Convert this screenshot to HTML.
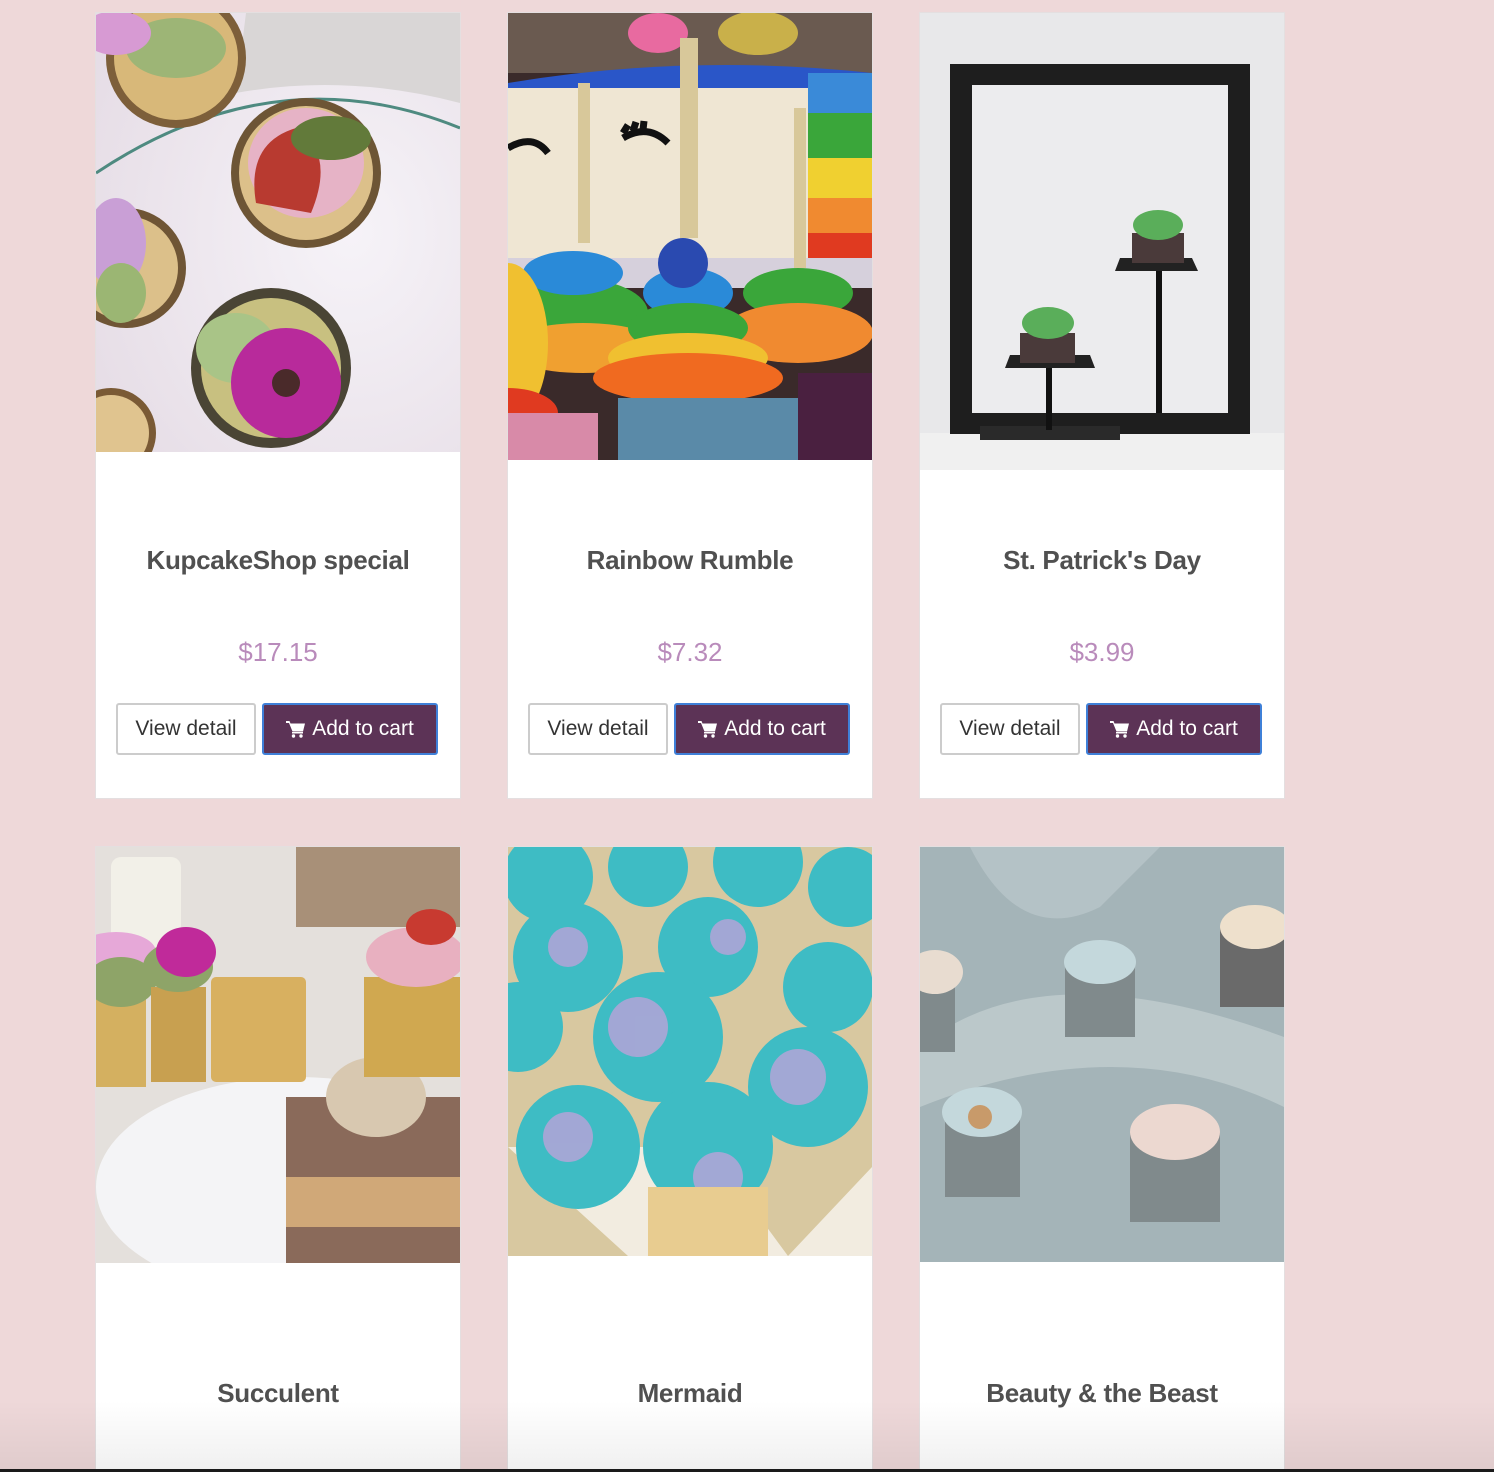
<!DOCTYPE html>
<html><head><meta charset="utf-8">
<style>
html,body{margin:0;padding:0;width:1494px;height:1472px;overflow:hidden}
body{background:#eed8d9;position:relative;font-family:"Liberation Sans",Roboto,sans-serif}
.card{position:absolute;width:364px;background:#fff;border:1px solid #e4dfe0}
.img{position:absolute;left:0;top:0;width:364px;display:block}
.t{position:absolute;left:0;width:364px;text-align:center;font-weight:bold;font-size:26px;color:#505050;letter-spacing:-0.3px}
.p{position:absolute;left:0;width:364px;text-align:center;font-size:26px;color:#b98bbb}
.b1{position:absolute;left:20px;width:136px;height:48px;border:2px solid #ccc;border-radius:3px;box-sizing:content-box;font-size:21px;color:#333;text-align:center;line-height:48px;background:#fff}
.b2{position:absolute;left:166px;width:172px;height:48px;border:2px solid #3f80d8;border-radius:3px;background:#5c3356;color:#fff;font-size:21px;text-align:center;line-height:48px}
.b2 svg{vertical-align:-3px;margin-right:6px}
.fade{position:absolute;left:0;top:1400px;width:1494px;height:69px;background:linear-gradient(rgba(0,0,0,0),rgba(0,0,0,0.06))}
.line{position:absolute;left:0;top:1469px;width:1494px;height:3px;background:#1a1a1a}
</style></head><body>

<!-- Card 1 -->
<div class="card" style="left:95px;top:12px;height:785px">
<svg class="img" height="439" viewBox="0 0 364 439">
<defs><radialGradient id="g1" cx="0.7" cy="0.5" r="0.8"><stop offset="0" stop-color="#f6f3f8"/><stop offset="1" stop-color="#e6dde6"/></radialGradient></defs>
<rect width="364" height="439" fill="url(#g1)"/>
<path d="M150 0 L364 0 L364 90 Q250 60 140 80 Z" fill="#d9d6d6"/>
<path d="M0 160 Q180 40 364 115" stroke="#4e8a80" stroke-width="3" fill="none"/>
<circle cx="80" cy="45" r="70" fill="#7d5f3a"/><circle cx="80" cy="45" r="62" fill="#d8b879"/>
<ellipse cx="80" cy="35" rx="50" ry="30" fill="#9db576"/>
<ellipse cx="20" cy="20" rx="35" ry="22" fill="#d79ad3"/>
<circle cx="210" cy="160" r="75" fill="#6d5535"/><circle cx="210" cy="160" r="67" fill="#dcc08a"/>
<ellipse cx="210" cy="150" rx="58" ry="55" fill="#e6b3c6"/>
<path d="M160 190 Q150 130 200 115 Q240 140 215 200 Z" fill="#b83a30"/>
<ellipse cx="235" cy="125" rx="40" ry="22" fill="#627a3a"/>
<circle cx="30" cy="255" r="60" fill="#6f5535"/><circle cx="30" cy="255" r="52" fill="#dcc08a"/>
<ellipse cx="20" cy="230" rx="30" ry="45" fill="#c99fd6"/>
<ellipse cx="25" cy="280" rx="25" ry="30" fill="#9bb673"/>
<circle cx="175" cy="355" r="80" fill="#4a4535"/><circle cx="175" cy="355" r="70" fill="#c8c080"/>
<ellipse cx="140" cy="335" rx="40" ry="35" fill="#a9c487"/>
<circle cx="190" cy="370" r="55" fill="#b82a9b"/><circle cx="190" cy="370" r="14" fill="#4a2a2a"/>
<circle cx="15" cy="420" r="45" fill="#7a5a35"/><circle cx="15" cy="420" r="38" fill="#e0c48f"/>
</svg>
<div class="t" style="top:532px">KupcakeShop special</div>
<div class="p" style="top:624px">$17.15</div>
<div class="b1" style="top:690px">View detail</div>
<div class="b2" style="top:690px"><svg width="20" height="18" viewBox="0 0 20 18"><path d="M0 1h3.5l1 2.5H19l-2 8H6.5L3 3H0z M6 12h11v1.5H6z" fill="#fff"/><circle cx="7.5" cy="16" r="1.7" fill="#fff"/><circle cx="15" cy="16" r="1.7" fill="#fff"/></svg>Add to cart</div>
</div>

<!-- Card 2 -->
<div class="card" style="left:507px;top:12px;height:785px">
<svg class="img" height="447" viewBox="0 0 364 447">
<rect width="364" height="447" fill="#3a2a2a"/>
<rect y="0" width="364" height="60" fill="#6a5a50"/>
<ellipse cx="150" cy="20" rx="30" ry="20" fill="#e86aa0"/>
<ellipse cx="250" cy="20" rx="40" ry="22" fill="#c9b04a"/>
<path d="M0 70 Q180 40 364 60 L364 90 L0 90Z" fill="#2a56c8"/>
<rect x="0" y="75" width="340" height="175" fill="#efe6d3"/>
<rect x="300" y="60" width="64" height="40" fill="#3a8ad8"/>
<rect x="300" y="100" width="64" height="45" fill="#3aa63a"/>
<rect x="300" y="145" width="64" height="40" fill="#f0d030"/>
<rect x="300" y="185" width="64" height="35" fill="#f08a30"/>
<rect x="300" y="220" width="64" height="25" fill="#e03a20"/>
<rect x="0" y="245" width="364" height="30" fill="#d6d0dc"/>
<path d="M0 135q25 -15 40 5 M115 125q25 -15 45 5 M115 120 l5 -8 M125 118 l3 -9 M135 117 l1 -9" stroke="#111" stroke-width="7" fill="none"/>
<rect x="172" y="25" width="18" height="200" fill="#d8c89a"/>
<rect x="70" y="70" width="12" height="160" fill="#d8c89a"/>
<rect x="286" y="95" width="12" height="160" fill="#d8c89a"/>
<ellipse cx="65" cy="300" rx="75" ry="35" fill="#3aa63a"/><ellipse cx="65" cy="260" rx="50" ry="22" fill="#2a8ad8"/>
<ellipse cx="75" cy="335" rx="80" ry="25" fill="#f0a030"/>
<ellipse cx="290" cy="280" rx="55" ry="25" fill="#3aa63a"/><ellipse cx="290" cy="320" rx="75" ry="30" fill="#f08a30"/>
<ellipse cx="0" cy="330" rx="40" ry="80" fill="#f0c030"/><ellipse cx="0" cy="400" rx="50" ry="25" fill="#e03a20"/>
<ellipse cx="180" cy="280" rx="45" ry="25" fill="#2a8ad8"/>
<ellipse cx="180" cy="315" rx="60" ry="25" fill="#3aa63a"/>
<ellipse cx="180" cy="345" rx="80" ry="25" fill="#f0c030"/>
<ellipse cx="180" cy="365" rx="95" ry="25" fill="#f06a20"/>
<ellipse cx="175" cy="250" rx="25" ry="25" fill="#2a4ab0"/>
<rect x="110" y="385" width="180" height="62" fill="#5a8aa8"/>
<rect x="0" y="400" width="90" height="47" fill="#d88aa8"/>
<rect x="290" y="360" width="74" height="87" fill="#4a2040"/>
</svg>
<div class="t" style="top:532px">Rainbow Rumble</div>
<div class="p" style="top:624px">$7.32</div>
<div class="b1" style="top:690px">View detail</div>
<div class="b2" style="top:690px"><svg width="20" height="18" viewBox="0 0 20 18"><path d="M0 1h3.5l1 2.5H19l-2 8H6.5L3 3H0z M6 12h11v1.5H6z" fill="#fff"/><circle cx="7.5" cy="16" r="1.7" fill="#fff"/><circle cx="15" cy="16" r="1.7" fill="#fff"/></svg>Add to cart</div>
</div>

<!-- Card 3 -->
<div class="card" style="left:919px;top:12px;height:785px">
<svg class="img" height="457" viewBox="0 0 364 457">
<rect width="364" height="457" fill="#e8e8ea"/>
<rect y="420" width="364" height="37" fill="#f0f0f0"/>
<rect x="30" y="51" width="300" height="370" fill="#1e1e1e"/>
<rect x="52" y="72" width="256" height="328" fill="#ececee"/>
<rect x="60" y="413" width="140" height="14" fill="#2a2a2a"/>
<rect x="126" y="355" width="6" height="62" fill="#111"/>
<path d="M85 355 L175 355 L170 342 L90 342Z" fill="#222"/>
<rect x="100" y="320" width="55" height="30" fill="#4a3a3a"/>
<ellipse cx="128" cy="310" rx="26" ry="16" fill="#5aae5a"/>
<rect x="236" y="250" width="6" height="150" fill="#111"/>
<path d="M195 258 L278 258 L272 245 L200 245Z" fill="#222"/>
<rect x="212" y="220" width="52" height="30" fill="#4a3a3a"/>
<ellipse cx="238" cy="212" rx="25" ry="15" fill="#5aae5a"/>
</svg>
<div class="t" style="top:532px">St. Patrick's Day</div>
<div class="p" style="top:624px">$3.99</div>
<div class="b1" style="top:690px">View detail</div>
<div class="b2" style="top:690px"><svg width="20" height="18" viewBox="0 0 20 18"><path d="M0 1h3.5l1 2.5H19l-2 8H6.5L3 3H0z M6 12h11v1.5H6z" fill="#fff"/><circle cx="7.5" cy="16" r="1.7" fill="#fff"/><circle cx="15" cy="16" r="1.7" fill="#fff"/></svg>Add to cart</div>
</div>

<!-- Card 4 -->
<div class="card" style="left:95px;top:846px;height:622px;border-bottom:none">
<svg class="img" height="416" viewBox="0 0 364 416">
<rect width="364" height="416" fill="#e4e0dc"/>
<rect x="200" y="0" width="164" height="80" fill="#a89078"/>
<rect x="15" y="10" width="70" height="90" rx="10" fill="#f2f0e8"/>
<ellipse cx="200" cy="340" rx="200" ry="110" fill="#f4f4f6"/>
<rect x="190" y="250" width="174" height="166" fill="#8a6a5a"/>
<rect x="190" y="330" width="174" height="50" fill="#d0a878"/>
<ellipse cx="280" cy="250" rx="50" ry="40" fill="#d8c8b0"/>
<rect x="0" y="100" width="50" height="140" fill="#d4b060"/>
<ellipse cx="20" cy="105" rx="40" ry="20" fill="#e6a8d8"/>
<ellipse cx="25" cy="135" rx="35" ry="25" fill="#8ea468"/>
<rect x="55" y="140" width="55" height="95" fill="#c8a050"/>
<ellipse cx="82" cy="120" rx="35" ry="25" fill="#8ea468"/>
<ellipse cx="90" cy="105" rx="30" ry="25" fill="#c02a9a"/>
<rect x="115" y="130" width="95" height="105" rx="5" fill="#d8b060"/>
<rect x="268" y="130" width="96" height="100" fill="#d0a850"/>
<ellipse cx="320" cy="110" rx="50" ry="30" fill="#e8b0c0"/>
<ellipse cx="335" cy="80" rx="25" ry="18" fill="#c83a30"/>
</svg>
<div class="t" style="top:531px">Succulent</div>
</div>

<!-- Card 5 -->
<div class="card" style="left:507px;top:846px;height:622px;border-bottom:none">
<svg class="img" height="409" viewBox="0 0 364 409">
<rect width="364" height="409" fill="#d8c8a0"/>
<path d="M0 300 L120 409 L364 409 L364 320 L280 409 L200 300 Z" fill="#f2ece0"/>
<g fill="#3ebcc4">
<circle cx="40" cy="30" r="45"/><circle cx="140" cy="20" r="40"/><circle cx="250" cy="15" r="45"/><circle cx="340" cy="40" r="40"/>
<circle cx="60" cy="110" r="55"/><circle cx="200" cy="100" r="50"/><circle cx="320" cy="140" r="45"/>
<circle cx="10" cy="180" r="45"/><circle cx="150" cy="190" r="65"/><circle cx="300" cy="240" r="60"/>
<circle cx="70" cy="300" r="62"/><circle cx="200" cy="300" r="65"/>
</g>
<g fill="#b4a4d8" opacity="0.85">
<circle cx="130" cy="180" r="30"/><circle cx="290" cy="230" r="28"/><circle cx="60" cy="290" r="25"/><circle cx="210" cy="330" r="25"/><circle cx="60" cy="100" r="20"/><circle cx="220" cy="90" r="18"/>
</g>
<rect x="140" y="340" width="120" height="69" fill="#e8cc90"/>
</svg>
<div class="t" style="top:531px">Mermaid</div>
</div>

<!-- Card 6 -->
<div class="card" style="left:919px;top:846px;height:622px;border-bottom:none">
<svg class="img" height="415" viewBox="0 0 364 415">
<rect width="364" height="415" fill="#a4b4b8"/>
<path d="M0 200 Q120 100 364 190 L364 260 Q200 180 0 260Z" fill="#c4d0d2" opacity="0.7"/>
<path d="M50 0 Q100 100 180 60 L240 0Z" fill="#c0ccce" opacity="0.6"/>
<rect x="145" y="115" width="70" height="75" fill="#808a8c"/>
<ellipse cx="180" cy="115" rx="36" ry="22" fill="#c4d8dc"/>
<rect x="0" y="125" width="35" height="80" fill="#808a8c"/>
<ellipse cx="15" cy="125" rx="28" ry="22" fill="#e8dcd0"/>
<rect x="300" y="80" width="64" height="80" fill="#6a6a6a"/>
<ellipse cx="335" cy="80" rx="35" ry="22" fill="#eee0cc"/>
<rect x="25" y="265" width="75" height="85" fill="#808a8c"/>
<ellipse cx="62" cy="265" rx="40" ry="25" fill="#c4d8dc"/>
<circle cx="60" cy="270" r="12" fill="#c89a6a"/>
<rect x="210" y="285" width="90" height="90" fill="#808a8c"/>
<ellipse cx="255" cy="285" rx="45" ry="28" fill="#ecd8d0"/>
</svg>
<div class="t" style="top:531px">Beauty &amp; the Beast</div>
</div>

<div class="fade"></div>
<div class="line"></div>
</body></html>
